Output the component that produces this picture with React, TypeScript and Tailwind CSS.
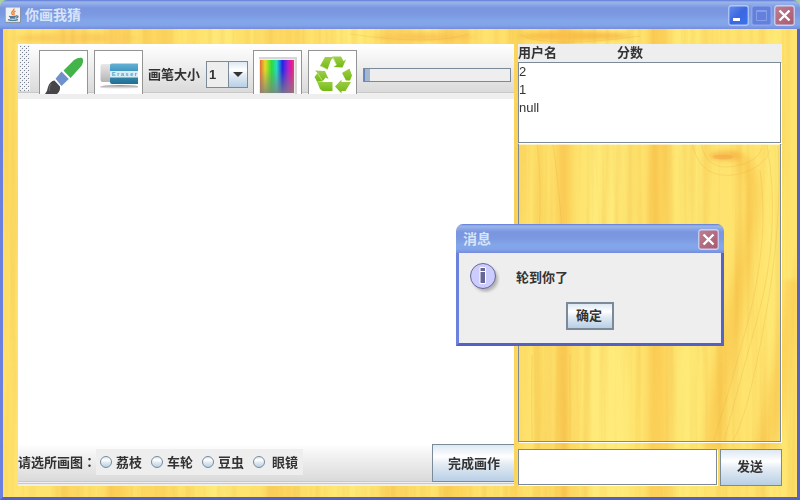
import React from "react";

const CJK = "font-['Liberation_Sans','Noto_Sans_CJK_SC',sans-serif]";
const METAL = "bg-[linear-gradient(to_bottom,#dde8f3_0%,#ffffff_32%,#e4ecf4_52%,#b8cfe5_100%)]";
const TITLE =
  "bg-[linear-gradient(to_bottom,#5b79d8_0px,#9db6ea_2px,#8fabe7_4px,#7b96e0_8px,#7b98e1_14px,#83a6ea_21px,#82a5ea_25px,#7a93df_28px,#758ade_29px)]";

const bands: [number, number, string, number][] = [
  [0, 14, "#fde069", 0.7],
  [56, 26, "#fbcb52", 0.5],
  [105, 24, "#fac44c", 0.6],
  [138, 34, "#fbcb52", 0.5],
  [210, 20, "#fff085", 0.6],
  [262, 40, "#fbcc55", 0.5],
  [335, 30, "#ffec7c", 0.7],
  [385, 26, "#fac54e", 0.5],
  [440, 30, "#fbca50", 0.6],
  [508, 12, "#fbcf56", 0.8],
  [536, 12, "#fcd45c", 0.6],
  [557, 13, "#f9c04a", 0.8],
  [588, 40, "#fff083", 0.55],
  [648, 20, "#fac54c", 0.65],
  [675, 26, "#ffef80", 0.5],
  [768, 14, "#fff07f", 0.5],
];

function Wood() {
  return (
    <svg className="absolute inset-0" width="794" height="468" viewBox="3 29 794 468" aria-hidden="true">
      <defs>
        <filter id="soft" x="-50%" y="-5%" width="200%" height="110%">
          <feGaussianBlur stdDeviation="5 2" />
        </filter>
        <filter id="grain" x="0" y="0" width="100%" height="100%" colorInterpolationFilters="sRGB">
          <feTurbulence type="fractalNoise" baseFrequency="0.12 0.003" numOctaves="3" seed="8" />
          <feColorMatrix values="0 0 0 0 0.93  0 0 0 0 0.7  0 0 0 0 0.24  2.6 0 0 0 -1.1" />
        </filter>
      </defs>
      <rect x="0" y="0" width="800" height="500" fill="#fee46f" />
      <g filter="url(#soft)">
        {bands.map(([x, w, c, o]) => (
          <rect key={x} x={x} y="0" width={w} height="500" fill={c} opacity={o} />
        ))}
        <path d="M727 150C740 165 752 175 739 245C727 310 712 350 704 450L722 450C727 390 745 320 753 245C762 195 764 160 735 150Z" fill="#fac850" opacity=".75" />
        <path d="M785 280Q775 370 755 450L775 450Q794 370 797 280Z" fill="#fac850" opacity=".65" />
        <ellipse cx="75" cy="38" rx="60" ry="5" fill="#fbcd5f" />
        <ellipse cx="425" cy="37" rx="50" ry="4" fill="#fbc85a" />
        <ellipse cx="575" cy="36" rx="55" ry="5" fill="#f9c04c" />
      </g>
      <rect x="0" y="0" width="800" height="500" filter="url(#grain)" opacity=".27" />
      <g fill="none" stroke="#e4aa3d" opacity=".25">
        <path d="M701 143Q706 172 735 166Q758 162 762 148M692 143Q700 182 740 174Q766 166 770 150" />
        <path d="M778 146Q783 220 765 320T732 442M767 145Q782 230 757 320T724 442M760 170Q770 240 747 325T713 442" />
        <path d="M537 144Q542 180 539 240M553 144Q563 210 565 310M532 355Q531 400 532 440M570 355V440" />
        <path d="M520 35Q550 49 640 36M350 34Q430 46 470 34" />
      </g>
      <ellipse cx="725" cy="156" rx="16" ry="5" fill="#f6b046" opacity=".65" style={{ filter: "blur(2px)" }} />
      <ellipse cx="723" cy="157" rx="10" ry="2.5" fill="#f0a340" opacity=".45" />
    </svg>
  );
}

function CloseX() {
  return (
    <svg width="21" height="21" viewBox="0 0 21 21">
      <defs>
        <linearGradient id="cl" x2="1" y2="1"><stop stopColor="#bd7f93" /><stop offset="1" stopColor="#a9586f" /></linearGradient>
      </defs>
      <rect x=".75" y=".75" width="19.5" height="19.5" rx="2.5" fill="url(#cl)" stroke="#c9d0f1" strokeWidth="1.3" />
      <path d="M5.500 5.500L15.500 15.500M15.500 5.500L5.500 15.500" stroke="#fff" strokeWidth="2.4" />
    </svg>
  );
}

function JavaIcon() {
  return (
    <svg width="16" height="16" viewBox="0 0 16 16">
      <rect width="16" height="16" rx="1" fill="#8794a8" />
      <rect x=".7" y=".5" width="14.3" height="14.3" fill="#eef0f1" />
      <path d="M9 1.500Q9.500 3 7.200 4.600Q6 6 7.800 8.200M10.500 4Q7.800 5.600 9 6.500Q9.600 7.300 8.500 8.500" fill="none" stroke="#ee8130" strokeWidth="1.3" />
      <path d="M4 9.300Q7 10.300 11 9.100M5 11H10.500M3 12.600Q8 14.300 13 12.600M11 9Q14 8.600 12.500 10.500L11 11.200" fill="none" stroke="#557b98" strokeWidth="1.3" />
    </svg>
  );
}

function ToolButton({ children }: { children: React.ReactNode }) {
  return (
    <button className="block h-[44px] w-[49px] shrink-0 overflow-hidden border border-b-0 border-[#949494] bg-white">
      {children}
    </button>
  );
}

function Brush() {
  return (
    <svg width="47" height="43" viewBox="40 51 47 43">
      <path d="M63.500 70.500L74 60Q78 57.300 81.500 57.800Q83.500 58.500 83 62Q82.500 65 80.500 67L70.500 78Z" fill="#42b449" />
      <path d="M61.500 71.500L68.800 79L61.500 86L55.500 78.800Z" fill="#6f90cb" />
      <path d="M54.500 80.500L60 86.500Q60.500 91 57 94H45Q47.500 91 48 87Q50 81 54.500 80.500Z" fill="#464648" />
      <path d="M51 84Q48.500 87 49.500 91" fill="none" stroke="#737373" strokeWidth=".8" />
    </svg>
  );
}

function Eraser() {
  return (
    <svg width="47" height="43" viewBox="95 51 47 43">
      <defs>
        <linearGradient id="er" x2="0" y2="1"><stop stopColor="#e8e8e8" /><stop offset="1" stopColor="#b4b4b4" /></linearGradient>
        <linearGradient id="eb" x2="0" y2="1"><stop stopColor="#65b2d5" /><stop offset=".35" stopColor="#4598c3" /><stop offset="1" stopColor="#217092" /></linearGradient>
        <linearGradient id="es" x2="0" y2="1"><stop stopColor="#909090" /><stop offset="1" stopColor="#fff" /></linearGradient>
      </defs>
      <ellipse cx="120" cy="87" rx="20" ry="2" fill="url(#es)" />
      <path d="M138 84H142V91H138Z" fill="#fff" />
      <rect x="100.500" y="64" width="12" height="18" rx="2" fill="url(#er)" />
      <path d="M110 65Q110 63.500 112 63.500H138V84H112Q110 84 110 82Z" fill="url(#eb)" />
      <rect x="110" y="71" width="28" height="6.500" fill="#d9edf6" />
      <text x="112" y="76.300" fontSize="5.500" textLength="25" fontFamily="Liberation Sans" fontWeight="700" fill="#4d9fc6">Eraser</text>
    </svg>
  );
}

function Palette() {
  return (
    <svg width="47" height="43" viewBox="254 51 47 43">
      <defs>
        <linearGradient id="hue">
          <stop stopColor="#e66b38" /><stop offset=".15" stopColor="#e6df20" /><stop offset=".34" stopColor="#29df38" /><stop offset=".49" stopColor="#24ddc7" /><stop offset=".66" stopColor="#2023e6" /><stop offset=".83" stopColor="#b020d1" /><stop offset=".93" stopColor="#f01493" /><stop offset="1" stopColor="#c65166" />
        </linearGradient>
        <linearGradient id="fade" x2="0" y2="1"><stop stopColor="#808080" stopOpacity="0" /><stop offset=".3" stopColor="#808080" stopOpacity=".05" /><stop offset="1" stopColor="#808080" stopOpacity=".82" /></linearGradient>
      </defs>
      <path d="M259 57H297V94H259Z" fill="#d6d6d6" />
      <path d="M259 59H295V94H259Z" fill="#efe9e9" />
      <rect x="260" y="60" width="34" height="33" fill="url(#hue)" />
      <rect x="260" y="60" width="34" height="33" fill="url(#fade)" />
    </svg>
  );
}

function Recycle() {
  return (
    <svg width="47" height="43" viewBox="309 51 47 43">
      <defs><linearGradient id="gr" x2="0" y2="1"><stop stopColor="#a0cf4b" /><stop offset="1" stopColor="#72b911" /></linearGradient></defs>
      <g fill="url(#gr)">
        <path d="M320 66L325 57H334L331 60L327.500 69.500Z" />
        <path d="M332 56.500H341L343.500 61L346 59.500L342.500 67.500L333.500 67L336.500 65Z" />
        <path d="M315 70.500L325 71L328.500 79L325.500 77.500L322.500 81.500H317L314.500 77L317.500 73Z" />
        <path d="M316.500 80.500L319.500 82H332.500V91H322.500L320 89Z" />
        <path d="M342 73L349.500 68.500L352 75.500L350 80.500H346Z" />
        <path d="M335 86.500L341.500 79.500V82H351L345.500 91H341.500V93.500Z" />
      </g>
      <path d="M321 66L327.500 69.500M317.500 73L322.500 81M332.500 56.500L336.500 65" stroke="#d3e9a7" strokeWidth=".7" />
    </svg>
  );
}

function Radio({ label, gap = "gap-1" }: { label: string; gap?: string }) {
  return (
    <label className={`flex w-[51px] shrink-0 items-center whitespace-nowrap ${gap}`}>
      <span className={`size-3 shrink-0 rounded-full border border-[#7a8a99] ${METAL}`} />
      <span>{label}</span>
    </label>
  );
}

function InfoIcon() {
  return (
    <svg width="32" height="32" viewBox="468 261 32 32">
      <circle cx="485.500" cy="279" r="12.500" fill="#777" opacity=".5" style={{ filter: "blur(1.5px)" }} />
      <circle cx="483" cy="276" r="12.500" fill="#ccccff" stroke="#666699" />
      <path d="M480 267.500H485.500V271.500H480ZM480 271.500H485.500V283.500H480Z" fill="#666699" stroke="#fff" />
    </svg>
  );
}

export default function App() {
  return (
    <div className={`relative flex h-[500px] w-[800px] flex-col overflow-hidden bg-[#a9cf9c] text-[13px] leading-none font-bold text-[#333333] ${CJK}`}>
      <header className={`flex h-[29px] shrink-0 items-center rounded-t-[7px] pr-[5px] pl-[5px] ${TITLE}`}>
        <JavaIcon />
        <h1 className="ml-[4px] flex-1 pt-px text-[14px] text-[#d8e4f8]">你画我猜</h1>
        <div className="flex gap-[2px] pt-[2px]">
          <svg width="21" height="21" viewBox="0 0 21 21">
            <defs><linearGradient id="min" x2="1" y2="1"><stop stopColor="#668ced" /><stop offset=".5" stopColor="#3b67df" /><stop offset="1" stopColor="#3a74ef" /></linearGradient></defs>
            <rect x=".75" y=".75" width="19.500" height="19.500" rx="2.500" fill="url(#min)" stroke="#b2c7f4" strokeWidth="1.300" />
            <rect x="5" y="13" width="7" height="3" fill="#fff" />
          </svg>
          <svg width="21" height="21" viewBox="0 0 21 21">
            <rect x=".75" y=".75" width="19.500" height="19.500" rx="2.500" fill="#6281df" stroke="#8fa8eb" strokeWidth="1.300" />
            <path d="M5.500 5.500H15.500V15.500H5.500ZM5 6.500H16" fill="none" stroke="#8b9de6" />
          </svg>
          <CloseX />
        </div>
      </header>

      <div className="h-[471px] border-x-[3px] border-b-[3px] border-x-[#6c80de] border-r-[#5662c4] border-b-[#5560c5] bg-[#fee36d]">
        <div className="relative h-[468px] w-[794px] overflow-hidden">
          <Wood />
          <main className="relative flex h-full pt-[15px] pl-[15px]">
            <section className="flex h-[442px] w-[496px] flex-col bg-white">
              <div className="relative flex h-[50px] shrink-0 items-end bg-[linear-gradient(to_bottom,#ffffff_0px,#f4f4f4_15px,#dadada_48px,#c8c8c8_48px,#c8c8c8_49px,#f0f0f0_49px)]">
                <svg className="mr-[9px] ml-[2px] self-start pt-px" width="10" height="48">
                  <defs>
                    <pattern id="bumps" width="4" height="4" patternUnits="userSpaceOnUse">
                      <path d="M0 1H1V2H0ZM2 3H3V4H2Z" fill="#75818e" />
                      <path d="M1 2H2V3H1ZM3 0H4V1H3Z" fill="#fff" />
                    </pattern>
                  </defs>
                  <rect width="10" height="46" fill="#f2f2f2" />
                  <rect width="10" height="46" fill="url(#bumps)" />
                </svg>
                <div className="flex gap-[6px]">
                  <ToolButton><Brush /></ToolButton>
                  <ToolButton><Eraser /></ToolButton>
                </div>
                <span className="ml-[5px] w-[58px] shrink-0 pb-[13px] whitespace-nowrap">画笔大小</span>
                <div className="mb-[6px] flex h-[27px] w-[42px] shrink-0 border border-[#7a8a99] bg-[#eeeeee]">
                  <span className="w-[21px] pt-[6px] pl-[2px] text-[13px]">1</span>
                  <span className={`flex flex-1 items-center justify-center border-l border-[#7a8a99] ${METAL}`}>
                    <svg width="10" height="5"><path d="M0 0H10L5 5Z" fill="#333" /></svg>
                  </span>
                </div>
                <div className="ml-[5px] flex gap-[6px]">
                  <ToolButton><Palette /></ToolButton>
                  <ToolButton><Recycle /></ToolButton>
                </div>
                <div className="mb-[12px] ml-[6px] h-[14px] w-[148px] border border-[#7a8a99] bg-[#eeeeee]">
                  <div className="h-full w-[6px] border-l border-[#6382bf] bg-[#a3b8cc]" />
                </div>
              </div>
              <div className="h-[5px] shrink-0 bg-[#eeeeee]" />
              <div className="h-[345px] shrink-0 bg-white" />
              <div className="flex h-[42px] shrink-0 items-start bg-[linear-gradient(to_bottom,#ffffff_0px,#f4f4f4_10px,#dadada_37px,#c8c8c8_37px,#c8c8c8_38px,#f0f0f0_38px,#f0f0f0_39px,#c8c8c8_39px,#c8c8c8_40px,#eeeeee_40px)]">
                <span className="w-[78px] shrink-0 pt-[11px] whitespace-nowrap">
                  请选所画图<span lang="zh-TW" className="font-['Noto_Sans_CJK_TC',sans-serif]">：</span>
                </span>
                <div className="mt-[5px] flex h-[26px] w-[207px] shrink-0 items-center bg-[#eeeeee] pl-[4px]">
                  <Radio label="荔枝" />
                  <Radio label="车轮" />
                  <Radio label="豆虫" />
                  <Radio label="眼镜" gap="gap-[7px]" />
                </div>
                <button className={`ml-[129px] h-[38px] w-[82px] shrink-0 border border-r-0 border-[#7a8a99] pl-px ${METAL}`}>完成画作</button>
              </div>
            </section>

            <aside className="ml-[4px] flex w-[264px] flex-col">
              <div className="flex h-[18px] shrink-0 bg-[#eeeeee] pt-[2px]">
                <span className="w-[99px]">用户名</span>
                <span>分数</span>
              </div>
              <ul className="h-[81px] w-[263px] shrink-0 border border-[#7a8a99] bg-white font-['Liberation_Sans'] text-[13px] leading-[18px] font-normal shadow-[1px_1px_0_#fff]">
                <li>2</li>
                <li>1</li>
                <li>null</li>
              </ul>
              <div className="mt-px h-[298px] w-[263px] shrink-0 border border-t-0 border-[#7a8a99] shadow-[1px_1px_0_#fff,inset_0_1px_0_#fff9]" />
              <div className="mt-[7px] flex gap-[3px]">
                <div className="h-[36px] w-[199px] border border-[#7a8a99] bg-white shadow-[1px_1px_0_#fff]" />
                <button className={`h-[37px] w-[62px] border border-[#7a8a99] pr-[2px] pb-[2px] ${METAL}`}>发送</button>
              </div>
            </aside>
          </main>
        </div>
      </div>

      <div role="dialog" className="absolute top-[224px] left-[456px] flex h-[122px] w-[268px] flex-col overflow-hidden rounded-t-[7px]">
        <div className={`flex h-[29px] shrink-0 items-center pr-[5px] pl-[7px] ${TITLE}`}>
          <h2 className="flex-1 text-[14px] text-[#d8e4f8]">消息</h2>
          <div className="pt-[2px]"><CloseX /></div>
        </div>
        <div className="flex h-[93px] flex-col border-x-[3px] border-b-[3px] border-x-[#6c80de] border-r-[#5662c4] border-b-[#5560c5] bg-[#eeeeee] pt-[8px]">
          <div className="flex h-[41px] pl-[9px]">
            <InfoIcon />
            <p className="pt-[10px] pl-[16px]">轮到你了</p>
          </div>
          <button className={`ml-[107px] h-[28px] w-[48px] border-2 border-[#7a8a99] pr-[2px] pb-px ${METAL}`}>确定</button>
        </div>
      </div>
    </div>
  );
}
